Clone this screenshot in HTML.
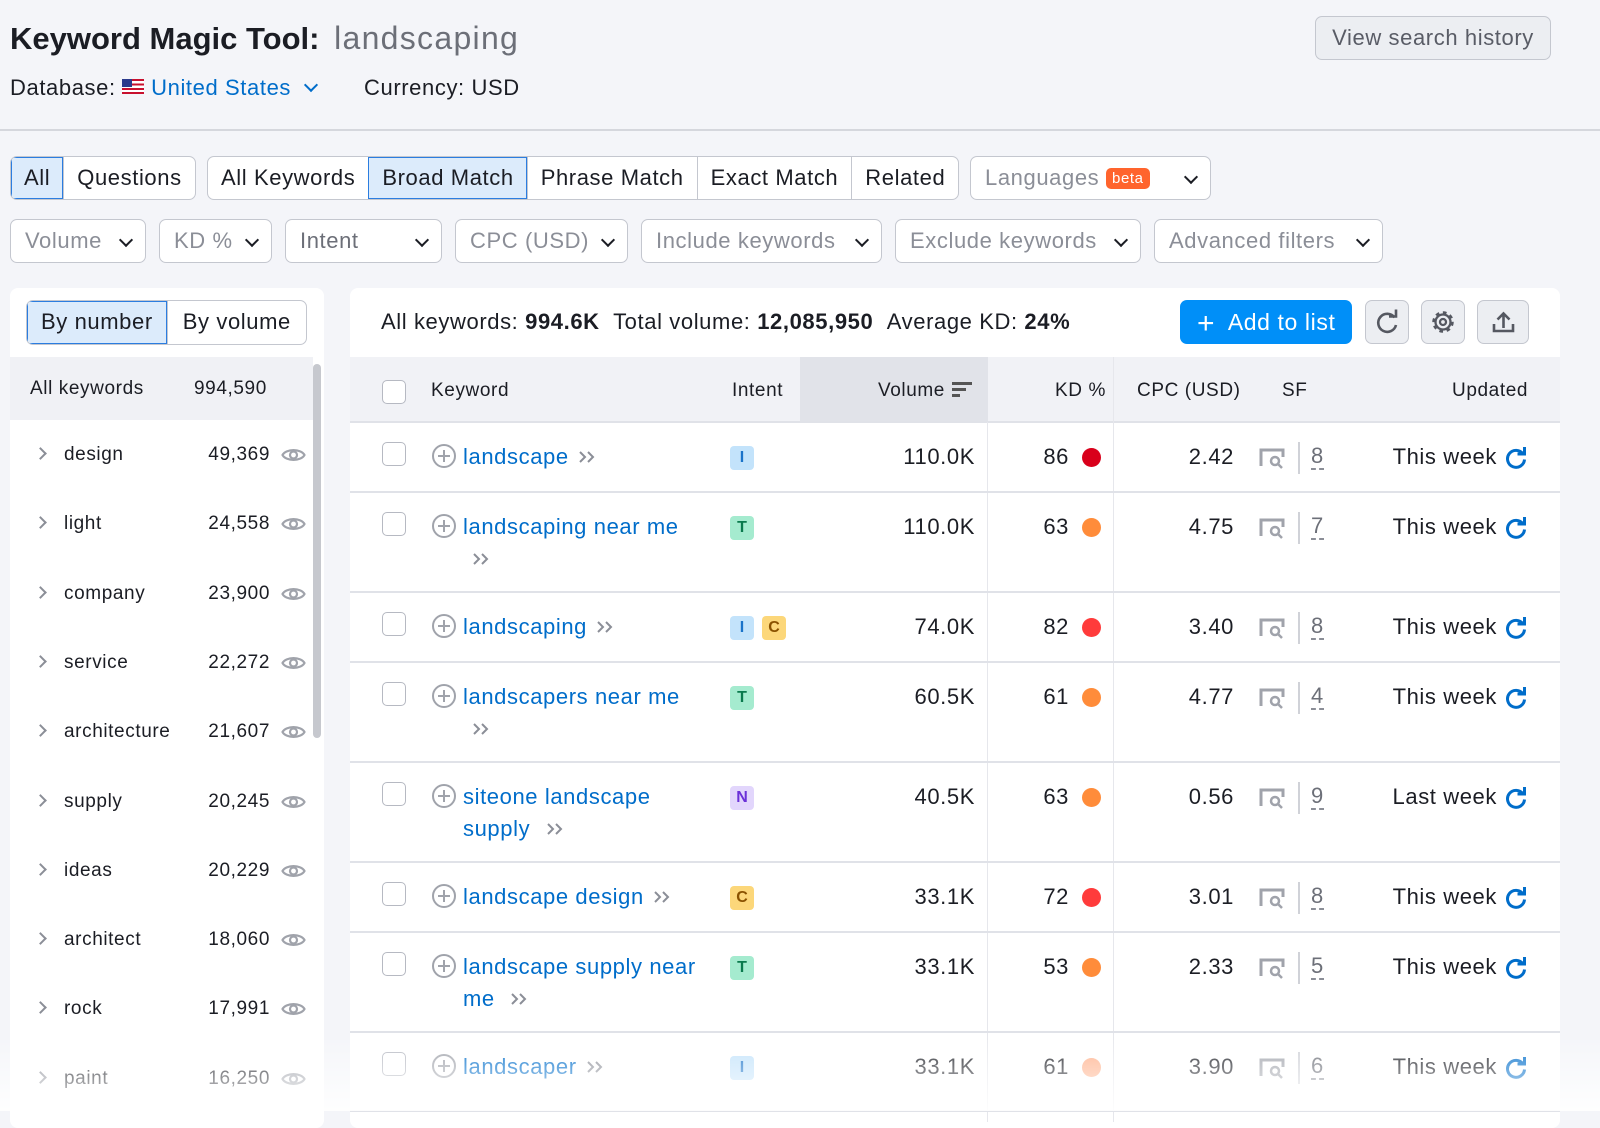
<!DOCTYPE html>
<html><head><meta charset="utf-8"><style>
*{box-sizing:border-box;margin:0;padding:0}
body{width:1600px;height:1111px;overflow:hidden;background:#f4f5f9;font-family:"Liberation Sans",Arial,sans-serif;color:#1b1d24;position:relative;letter-spacing:0.6px}
.a{position:absolute;white-space:nowrap}
.btn{position:absolute;height:44px;border:1px solid #c4c7cf;border-radius:7px;background:#fff;font-size:22px;line-height:42px;white-space:nowrap}
.grp{position:absolute;display:flex;height:44px;border:1px solid #c4c7cf;border-radius:7px;background:#fff;overflow:hidden;font-size:22px}
.grp div{padding:0 13px;line-height:42px;border-left:1px solid #c4c7cf;white-space:nowrap}
.grp div:first-child{border-left:none}
.grp .on{background:#dcebfb;outline:1px solid #2b7de0;outline-offset:-1px}
.f{color:#8b8e97;padding-left:14px}
.chev{position:absolute;right:14px;top:15px;width:10px;height:10px;border-right:2.5px solid #1b1d24;border-bottom:2.5px solid #1b1d24;transform:rotate(45deg)}
.panel{position:absolute;background:#fff;border-radius:8px}
.side{position:absolute;left:30px;font-size:19px}
.kw{color:#006dca;font-size:22px}
.cb{position:absolute;left:382px;width:24px;height:24px;border:1.5px solid #b6b9c2;border-radius:5px;background:#fff}
.pl{position:absolute;left:432px;width:24px;height:24px;border:2px solid #a0a3ab;border-radius:50%}
.pl:before{content:"";position:absolute;left:4px;top:9px;width:12px;height:2px;background:#a0a3ab}
.pl:after{content:"";position:absolute;left:9px;top:4px;width:2px;height:12px;background:#a0a3ab}
.bd{position:absolute;width:24px;height:24px;border-radius:4px;font-size:16px;font-weight:bold;text-align:center;line-height:24px;letter-spacing:0}
.I{background:#c3e3fb;color:#1a73c9}.T{background:#a5ebcf;color:#0a7a4d}.C{background:#fcd77a;color:#8a5200}.N{background:#e2d6fc;color:#6b31d8}
.num{position:absolute;font-size:22px;text-align:right}
.dot{position:absolute;left:1082px;width:19px;height:19px;border-radius:50%}
.hl{position:absolute;left:350px;width:1210px;height:1px;background:#e0e2e8}
</style></head><body>
<div class="a" style="left:10px;top:20px;font-size:31px;font-weight:bold;letter-spacing:0">Keyword Magic Tool: <span style="color:#6c6f78;font-weight:normal;padding-left:6px;font-size:32px;letter-spacing:1.3px">landscaping</span></div>
<div class="a" style="left:10px;top:75px;font-size:22px">Database: <span style="display:inline-block;width:22px;height:15px;background:repeating-linear-gradient(#c8102e 0 2.2px,#fff 2.2px 4.4px);position:relative;vertical-align:1px"><span style="position:absolute;left:0;top:0;width:10px;height:8px;background:#2b3a8c"></span></span> <span style="color:#006dca">United States</span></div>
<div class="a" style="left:306px;top:80px;width:10px;height:10px;border-right:2.5px solid #006dca;border-bottom:2.5px solid #006dca;transform:rotate(45deg)"></div>
<div class="a" style="left:364px;top:75px;font-size:22px">Currency: USD</div>
<div class="btn" style="left:1315px;top:16px;width:236px;background:#eceef2;color:#595c66;text-align:center">View search history</div>
<div class="a" style="left:0;top:129px;width:1600px;height:2px;background:#d5d7dd"></div>

<div class="grp" style="left:10px;top:156px"><div class="on">All</div><div>Questions</div></div>
<div class="grp" style="left:207px;top:156px"><div>All Keywords</div><div class="on">Broad Match</div><div>Phrase Match</div><div>Exact Match</div><div>Related</div></div>
<div class="btn f" style="left:970px;top:156px;width:241px">Languages <span style="display:inline-block;background:#ff642d;color:#fff;font-size:15px;line-height:21px;padding:0 6px;border-radius:5px;vertical-align:2px">beta</span><span class="chev"></span></div>

<div class="btn f" style="left:10px;top:219px;width:136px">Volume<span class="chev"></span></div>
<div class="btn f" style="left:159px;top:219px;width:113px">KD %<span class="chev"></span></div>
<div class="btn f" style="left:285px;top:219px;width:157px;color:#6c6f78">Intent<span class="chev"></span></div>
<div class="btn f" style="left:455px;top:219px;width:173px">CPC (USD)<span class="chev"></span></div>
<div class="btn f" style="left:641px;top:219px;width:241px">Include keywords<span class="chev"></span></div>
<div class="btn f" style="left:895px;top:219px;width:246px">Exclude keywords<span class="chev"></span></div>
<div class="btn f" style="left:1154px;top:219px;width:229px">Advanced filters<span class="chev"></span></div>

<div class="panel" style="left:10px;top:288px;width:314px;height:840px"></div>
<div class="grp" style="left:26px;top:300px;height:45px"><div class="on" style="padding:0 14px">By number</div><div style="padding:0 15px">By volume</div></div>
<div class="a" style="left:10px;top:357px;width:303px;height:63px;background:#f0f1f5"></div>
<div class="a" style="left:313px;top:364px;width:8px;height:374px;background:#c6c8ce;border-radius:4px"></div>
<div class="side" style="top:378px">All keywords</div><div class="side" style="top:378px;left:194px">994,590</div>
<div id="sidelist"></div>

<div class="panel" style="left:350px;top:288px;width:1210px;height:840px"></div>
<div class="a" style="left:381px;top:309px;font-size:22px">All keywords: <b>994.6K</b> &nbsp;Total volume: <b>12,085,950</b> &nbsp;Average KD: <b>24%</b></div>
<div class="a" style="left:1180px;top:300px;width:172px;height:44px;background:#008ff8;border-radius:7px;color:#fff;font-size:23px;line-height:44px;padding-left:17px"><span style="font-size:30px;vertical-align:-3px">+</span>&nbsp; Add to list</div>
<div class="btn" style="left:1365px;top:300px;width:44px;background:#eceef2"><svg width="44" height="44" viewBox="0 0 44 44"><path d="M28.5 16.5A9 9 0 1 0 30 24" fill="none" stroke="#555861" stroke-width="2.6"/><path d="M23 15.5h7v-7" fill="none" stroke="#555861" stroke-width="2.6"/></svg></div>
<div class="btn" style="left:1421px;top:300px;width:44px;background:#eceef2"><svg width="44" height="44" viewBox="0 0 44 44"><circle cx="21" cy="21" r="9" fill="none" stroke="#555861" stroke-width="3.5" stroke-dasharray="3.5 3.5"/><circle cx="21" cy="21" r="7.5" fill="none" stroke="#555861" stroke-width="2.3"/><circle cx="21" cy="21" r="3" fill="none" stroke="#555861" stroke-width="2.3"/></svg></div>
<div class="btn" style="left:1477px;top:300px;width:52px;background:#eceef2"><svg width="52" height="44" viewBox="0 0 52 44"><path d="M16 23v7h19v-7M25.5 27V13M19.5 18.5l6-6 6 6" fill="none" stroke="#555861" stroke-width="2.6"/></svg></div>

<div class="a" style="left:350px;top:357px;width:1210px;height:65px;background:#f1f2f6"></div>
<div class="a" style="left:800px;top:357px;width:188px;height:65px;background:#e1e3e9"></div>
<div class="cb" style="top:380px"></div>
<div class="a" style="left:431px;top:380px;font-size:19px">Keyword</div>
<div class="a" style="left:732px;top:380px;font-size:19px">Intent</div>
<div class="a" style="left:878px;top:380px;font-size:19px">Volume</div>
<div class="a" style="left:952px;top:382px;width:20px;height:2.5px;background:#555"></div><div class="a" style="left:952px;top:388px;width:14px;height:2.5px;background:#555"></div><div class="a" style="left:952px;top:394px;width:8px;height:2.5px;background:#555"></div>
<div class="a" style="left:1055px;top:380px;font-size:19px">KD %</div>
<div class="a" style="left:1137px;top:380px;font-size:19px">CPC (USD)</div>
<div class="a" style="left:1282px;top:380px;font-size:19px">SF</div>
<div class="a" style="left:1452px;top:380px;font-size:19px">Updated</div>
<div class="hl" style="top:421px;height:2px"></div>
<div class="a" style="left:987px;top:422px;width:1px;height:700px;background:#e6e7ec"></div>
<div class="a" style="left:1113px;top:357px;width:1px;height:765px;background:#e6e7ec"></div>
<div id="rows"></div>
<div class="a" style="left:0;top:1040px;width:1600px;height:71px;background:linear-gradient(rgba(255,255,255,0.1),rgba(255,255,255,0.9))"></div>
<script>
var s=[["design","49,369"],["light","24,558"],["company","23,900"],["service","22,272"],["architecture","21,607"],["supply","20,245"],["ideas","20,229"],["architect","18,060"],["rock","17,991"],["paint","16,250"]];
var h="";s.forEach(function(r,i){var y=444+i*69.3;
h+='<div class="a" style="left:36px;top:'+(y+5)+'px;width:9px;height:9px;border-right:2px solid #8b8e97;border-top:2px solid #8b8e97;transform:rotate(45deg)"></div>';
h+='<div class="side" style="left:64px;top:'+y+'px">'+r[0]+'</div><div class="side" style="left:160px;width:110px;text-align:right;top:'+y+'px">'+r[1]+'</div>';
h+='<svg class="a" style="left:281px;top:'+(y+1)+'px" width="25" height="20" viewBox="0 0 25 20"><path d="M1.5 10C5 3.5 20 3.5 23.5 10C20 16.5 5 16.5 1.5 10Z" fill="none" stroke="#a0a3ab" stroke-width="2.2"/><circle cx="12.5" cy="10" r="3.5" fill="none" stroke="#a0a3ab" stroke-width="2.2"/></svg>';});
document.getElementById("sidelist").innerHTML=h;
var R=[[422,492,"landscape",null,["I"],"110.0K",86,"#d9001b","2.42",8,"This week"],
[492,592,"landscaping near me","",["T"],"110.0K",63,"#ff8c3a","4.75",7,"This week"],
[592,662,"landscaping",null,["I","C"],"74.0K",82,"#ff3b3b","3.40",8,"This week"],
[662,762,"landscapers near me","",["T"],"60.5K",61,"#ff8c3a","4.77",4,"This week"],
[762,862,"siteone landscape","supply",["N"],"40.5K",63,"#ff8c3a","0.56",9,"Last week"],
[862,932,"landscape design",null,["C"],"33.1K",72,"#ff3b3b","3.01",8,"This week"],
[932,1032,"landscape supply near","me",["T"],"33.1K",53,"#ff8c3a","2.33",5,"This week"],
[1032,1111,"landscaper",null,["I"],"33.1K",61,"#ffb08a","3.90",6,"This week"]];
var c='<svg width="20" height="16" viewBox="0 0 20 16" style="vertical-align:-1px;margin-left:8px"><path d="M3 3l5 5-5 5M11 3l5 5-5 5" fill="none" stroke="#8b8e97" stroke-width="2"/></svg>';
h="";R.forEach(function(r){var y=r[0]+22;
h+='<div class="cb" style="top:'+(r[0]+20)+'px"></div><div class="pl" style="top:'+(r[0]+22)+'px"></div>';
h+='<div class="a kw" style="left:463px;top:'+y+'px">'+r[2]+(r[3]===null?c:'')+'</div>';
if(r[3]!==null)h+='<div class="a kw" style="left:463px;top:'+(y+32)+'px">'+r[3]+(r[3]?' ':'')+c+'</div>';
r[4].forEach(function(b,i){h+='<div class="bd '+b+'" style="left:'+(730+i*32)+'px;top:'+(r[0]+24)+'px">'+b+'</div>';});
h+='<div class="num" style="left:860px;width:115px;top:'+y+'px">'+r[5]+'</div>';
h+='<div class="num" style="left:1000px;width:69px;top:'+y+'px">'+r[6]+'</div><div class="dot" style="background:'+r[7]+';top:'+(r[0]+26)+'px"></div>';
h+='<div class="num" style="left:1130px;width:104px;top:'+y+'px">'+r[8]+'</div>';
h+='<svg class="a" style="left:1259px;top:'+(r[0]+25)+'px" width="27" height="22" viewBox="0 0 27 22"><path d="M2 19V3h22v7" fill="none" stroke="#a0a3ab" stroke-width="3"/><circle cx="16" cy="14" r="4" fill="none" stroke="#a0a3ab" stroke-width="2.5"/><path d="M19 17l4 4" stroke="#a0a3ab" stroke-width="2.5"/></svg>';
h+='<div class="a" style="left:1298px;top:'+(r[0]+20)+'px;width:2px;height:32px;background:#d0d2d8"></div>';
h+='<div class="a" style="left:1311px;top:'+y+'px;font-size:22px;color:#6c6f78;border-bottom:2px dashed #8b8e97;line-height:24px">'+r[9]+'</div>';
h+='<div class="num" style="left:1360px;width:137px;top:'+y+'px">'+r[10]+'</div>';
h+='<svg class="a" style="left:1504px;top:'+(r[0]+24)+'px" width="24" height="24" viewBox="0 0 24 24"><path d="M19 8A8.5 8.5 0 1 0 20.5 13.5" fill="none" stroke="#006dca" stroke-width="3"/><path d="M13.5 8h7V1" fill="none" stroke="#006dca" stroke-width="3"/></svg>';
h+='<div class="hl" style="top:'+(r[1]-1)+'px;height:2px"></div>';});
document.getElementById("rows").innerHTML=h;
</script>
</body></html>
